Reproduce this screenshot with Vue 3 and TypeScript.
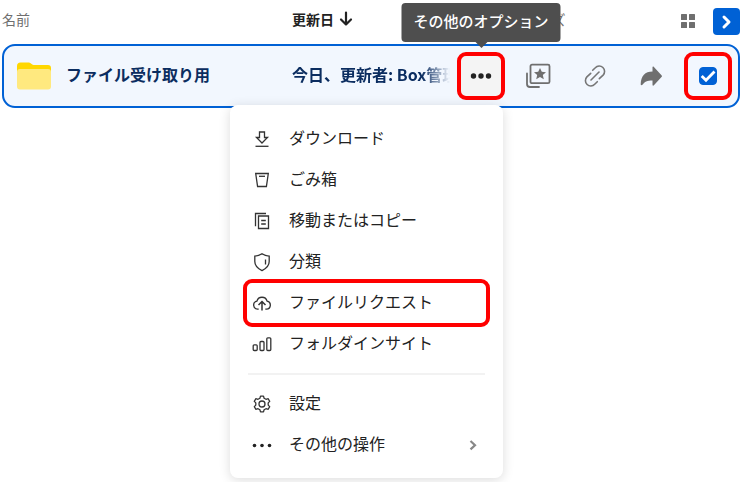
<script setup lang="ts">
import { ref } from 'vue'

type IconName = 'download' | 'trash' | 'copy' | 'shield' | 'upload' | 'insights' | 'settings' | 'more'

interface MenuItem {
  icon: IconName
  label: string
  marked?: boolean
  submenu?: boolean
}

const groups: MenuItem[][] = [
  [
    { icon: 'download', label: 'ダウンロード' },
    { icon: 'trash', label: 'ごみ箱' },
    { icon: 'copy', label: '移動またはコピー' },
    { icon: 'shield', label: '分類' },
    { icon: 'upload', label: 'ファイルリクエスト', marked: true },
    { icon: 'insights', label: 'フォルダインサイト' },
  ],
  [
    { icon: 'settings', label: '設定' },
    { icon: 'more', label: 'その他の操作', submenu: true },
  ],
]

const selected = ref(true)
</script>

<template>
  <main class="page">
    <table class="files">
      <thead>
        <tr class="head">
          <th class="label" scope="col">名前</th>
          <th class="label sorted" scope="col" aria-sort="descending">
            更新日
            <svg width="14" height="16" viewBox="0 0 14 16" aria-hidden="true">
              <path d="M7 1.5v12M2 8.5l5 5 5-5" fill="none" stroke="#222" stroke-width="2.2" stroke-linecap="round" stroke-linejoin="round" />
            </svg>
          </th>
          <th class="label" scope="col">サイズ</th>
          <th class="tools">
            <button class="plain" type="button" aria-label="グリッド表示">
              <svg width="14" height="14" viewBox="0 0 14 14" fill="#6f6f6f">
                <rect width="6" height="6" rx="0.5" /><rect x="8" width="6" height="6" rx="0.5" />
                <rect y="8" width="6" height="6" rx="0.5" /><rect x="8" y="8" width="6" height="6" rx="0.5" />
              </svg>
            </button>
            <button class="expand" type="button" aria-label="サイドバーを開く">
              <svg width="27" height="27" viewBox="0 0 27 27">
                <path d="M11 9l5 5-5 5" fill="none" stroke="#fff" stroke-width="3" stroke-linecap="round" stroke-linejoin="round" />
              </svg>
            </button>
          </th>
        </tr>
      </thead>
      <tbody>
        <tr class="row">
          <td class="name">
            <svg width="34" height="28" viewBox="0 0 34 28" aria-hidden="true">
              <path d="M0 4a3.500 3.500 0 0 1 3.500-3.500H12c2 0 2.500 2.500 4.500 2.500H31a3 3 0 0 1 3 3v9H0z" fill="#ffd700" />
              <rect y="7" width="34" height="20.500" rx="3" fill="#ffe97f" />
            </svg>
            <a href="#">ファイル受け取り用</a>
          </td>
          <td class="updated">今日、更新者: Box管理</td>
          <td class="actions">
            <div class="more">
              <button class="action dots" type="button" aria-label="その他のオプション" aria-haspopup="menu" aria-expanded="true">
                <svg width="22" height="6" viewBox="0 0 22 6" fill="#222">
                  <circle cx="3.500" cy="3" r="2.700" /><circle cx="11" cy="3" r="2.700" /><circle cx="18.500" cy="3" r="2.700" />
                </svg>
              </button>
              <div class="tooltip" role="tooltip">その他のオプション</div>
              <div class="menu" role="menu">
                <div v-for="(group, i) in groups" :key="i" class="group">
                  <button
                    v-for="item in group"
                    :key="item.label"
                    class="item"
                    :class="{ marked: item.marked }"
                    type="button"
                    role="menuitem"
                  >
                    <svg class="icon" width="20" height="20" viewBox="0 0 20 20" aria-hidden="true">
                      <g v-if="item.icon === 'download'">
                        <path d="M7.500 3h5v5.500h3L10 14 4.500 8.500h3z" /><path d="M3.500 17.300h13" />
                      </g>
                      <g v-else-if="item.icon === 'trash'">
                        <path d="M3.700 3.500h12.600l-1.900 13H5.600z" /><path d="M7 6.300h6" />
                      </g>
                      <g v-else-if="item.icon === 'copy'">
                        <path d="M14 2.500H3.500v12.800" /><path d="M6.500 5h10v12.500h-10z" /><path d="M9.200 9.500h4.600M9.200 13h4.600" />
                      </g>
                      <g v-else-if="item.icon === 'shield'">
                        <path d="M10 1.800c2.200 1.500 4.600 2.200 7.200 2.300v5.500c0 4.200-2.900 7-7.200 9-4.300-2-7.200-4.800-7.200-9V4.100c2.600-.1 5-.8 7.200-2.300z" /><path d="M13.500 7.500v5" />
                      </g>
                      <g v-else-if="item.icon === 'upload'">
                        <path d="M6.700 16.200H5.500a4.100 4.100 0 0 1-.6-8.100 5.300 5.300 0 0 1 10.200 0 4.100 4.100 0 0 1-.6 8.100h-1.200" /><path d="M10 17.500V8.800M6.500 12 10 8.500l3.500 3.500" stroke-width="1.500" />
                      </g>
                      <g v-else-if="item.icon === 'insights'">
                        <rect x="1.200" y="10.800" width="4" height="5.700" rx="1" /><rect x="8" y="7.500" width="4" height="9" rx="1" /><rect x="14.800" y="3.800" width="4" height="12.700" rx="1" />
                      </g>
                      <g v-else-if="item.icon === 'settings'" stroke-linejoin="round">
                        <path d="M7.900 4.200 8.500 2.100h3l.6 2.100 1.900 1.100 2.200-.6 1.500 2.700-1.500 1.500v2.200l1.500 1.500-1.500 2.700-2.200-.6-1.900 1.100-.6 2.100h-3l-.6-2.100L6 14.700l-2.200.6-1.500-2.700 1.500-1.500V8.900L2.300 7.400l1.500-2.700 2.200.6z" /><circle cx="10" cy="10" r="3" />
                      </g>
                      <g v-else class="solid">
                        <circle cx="2.500" cy="10.500" r="1.800" /><circle cx="10" cy="10.500" r="1.800" /><circle cx="17.500" cy="10.500" r="1.800" />
                      </g>
                    </svg>
                    <span class="text">{{ item.label }}</span>
                    <svg v-if="item.submenu" class="chevron" width="8" height="12" viewBox="0 0 8 12" aria-hidden="true">
                      <path d="M1.500 2l4.500 4.200-4.500 4.200" fill="none" stroke="#888" stroke-width="2.200" />
                    </svg>
                  </button>
                </div>
              </div>
            </div>
            <button class="action" type="button" aria-label="コレクションに追加">
              <svg width="26" height="26" viewBox="0 0 26 26">
                <rect x="5.500" y="1.700" width="19" height="18.500" rx="1.500" fill="none" stroke="#6f6f6f" stroke-width="1.800" />
                <path d="M2 10.500v10.500a3 3 0 0 0 3 3H14" fill="none" stroke="#6f6f6f" stroke-width="1.800" stroke-linecap="round" />
                <path d="M15 5l1.800 3.800 4.200.4-3.200 2.800 1 4.200-3.800-2.200-3.800 2.200 1-4.200L9 9.200l4.200-.4z" fill="#6f6f6f" />
              </svg>
            </button>
            <button class="action" type="button" aria-label="リンクをコピー">
              <svg width="24" height="24" viewBox="0 0 24 24" fill="none" stroke="#767676" stroke-width="1.600" stroke-linecap="round">
                <path d="M9.700 6.300l2.600-2.600a5.200 5.200 0 0 1 7.800 7.400L16.300 14.700" />
                <path d="M14.300 17.700l-2.600 2.600a5.200 5.200 0 0 1-7.800-7.400L7.700 9.300" />
                <path d="M8 16l8-8" />
              </svg>
            </button>
            <button class="action" type="button" aria-label="共有">
              <svg width="24" height="22" viewBox="0 0 24 22">
                <path d="M13.500 2.200v4.300C6 6.500 2 11 1.700 19.300c0 .8.500 1 1.500.8 2.300-3.500 5-4.600 10.300-4.600v4.200c0 1 .7 1.200 1.400.6l7.600-8.200c.6-.7.600-1.200 0-1.900l-7.600-8.300c-.7-.7-1.400-.6-1.400.3z" fill="#6f6f6f" />
              </svg>
            </button>
            <label class="action select">
              <input v-model="selected" type="checkbox" aria-label="ファイル受け取り用を選択" />
              <svg v-if="selected" width="18" height="18" viewBox="0 0 18 18" aria-hidden="true">
                <path d="M2.700 9l4.300 4.300 8.500-8.800" fill="none" stroke="#fff" stroke-width="2.800" />
              </svg>
            </label>
          </td>
        </tr>
      </tbody>
    </table>
  </main>
</template>

<style>
body {
  margin: 0;
  background: #fff;
}
</style>

<style scoped>
.page {
  min-height: 100vh;
}

.files {
  display: block;
  padding: 0 7px 0 2px;
  font-family: "Noto Sans CJK JP", sans-serif;
  color: #222;
}

thead,
tbody {
  display: block;
}

button {
  padding: 0;
  border: 0;
  background: none;
  font: inherit;
  color: inherit;
}

svg {
  display: block;
  flex: none;
}

th,
td {
  padding: 0;
}

.head {
  display: grid;
  grid-template-columns: 290px 232px auto 1fr;
  height: 44px;
}

.label {
  display: flex;
  align-items: center;
  gap: 5px;
  padding-bottom: 6px;
  font-size: 14px;
  font-weight: 400;
  color: #6f6f6f;
}

.sorted {
  font-weight: 700;
  color: #222;
}

.tools {
  display: flex;
  align-items: center;
  justify-content: flex-end;
  gap: 18px;
  padding-bottom: 2px;
}

.expand {
  border-radius: 4px;
  background: #0061d5;
}

.row {
  display: grid;
  grid-template-columns: 288px minmax(0, 1fr) 275px;
  align-items: center;
  box-sizing: border-box;
  height: 64px;
  padding-right: 6px;
  border: 2px solid #0061d5;
  border-radius: 13px;
  background: #f2f7fe;
  font-size: 16px;
  font-weight: 700;
  line-height: 24px;
  color: #0b2d60;
}

.name {
  display: flex;
  align-items: center;
  gap: 15px;
  padding-left: 13px;
}

.name a {
  padding-bottom: 4px;
  color: inherit;
  text-decoration: none;
}

.updated {
  overflow: hidden;
  margin-right: 7px;
  padding-bottom: 4px;
  white-space: nowrap;
  mask-image: linear-gradient(to right, #000 calc(100% - 28px), transparent);
}

.actions {
  display: flex;
  justify-content: space-between;
}

.action {
  display: grid;
  place-items: center;
  box-sizing: border-box;
  width: 48px;
  height: 48px;
}

.dots,
.select {
  border: 4px solid #f00;
  border-radius: 9px;
}

.dots {
  background: #f4f4f4;
}

.select > * {
  grid-area: 1 / 1;
}

.select input {
  appearance: none;
  width: 18px;
  height: 18px;
  margin: 0;
  border: 1px solid #0061d5;
  border-radius: 4px;
}

.select input:checked {
  background: #0061d5;
}

.select svg {
  pointer-events: none;
}

.more {
  position: relative;
  font-weight: 400;
  color: #222;
}

.tooltip {
  position: absolute;
  bottom: 58px;
  left: 50%;
  box-sizing: border-box;
  padding: 6px 12px 9px;
  border-radius: 4px;
  background: #4e4e4e;
  font-size: 15px;
  font-weight: 500;
  line-height: 24px;
  color: #fff;
  white-space: nowrap;
  transform: translateX(-50%);
}

.tooltip::after {
  position: absolute;
  top: 100%;
  left: 50%;
  border: 6px solid transparent;
  border-top-color: #4e4e4e;
  border-bottom: 0;
  content: "";
  transform: translateX(-50%);
}

.menu {
  position: absolute;
  top: 53px;
  right: 2px;
  z-index: 1;
  box-sizing: border-box;
  width: 273px;
  padding: 13px 18px;
  border-radius: 8px;
  background: #fff;
  box-shadow: 0 2px 12px rgb(0 0 0 / 14%);
}

.group + .group {
  margin-top: 9px;
  padding-top: 8px;
  border-top: 2px solid #f2f2f2;
}

.item {
  position: relative;
  display: flex;
  align-items: center;
  gap: 17px;
  width: 100%;
  height: 41px;
  padding: 0 8px 0 4px;
  text-align: left;
}

.item.marked::before {
  position: absolute;
  inset: -3px -5px -4px;
  border: 4px solid #f00;
  border-radius: 9px;
  content: "";
}

.text {
  padding-bottom: 4px;
}

.icon {
  fill: none;
  stroke: #333;
  stroke-width: 1.3;
}

.solid {
  fill: #222;
  stroke: none;
}

.chevron {
  margin-left: auto;
}
</style>
